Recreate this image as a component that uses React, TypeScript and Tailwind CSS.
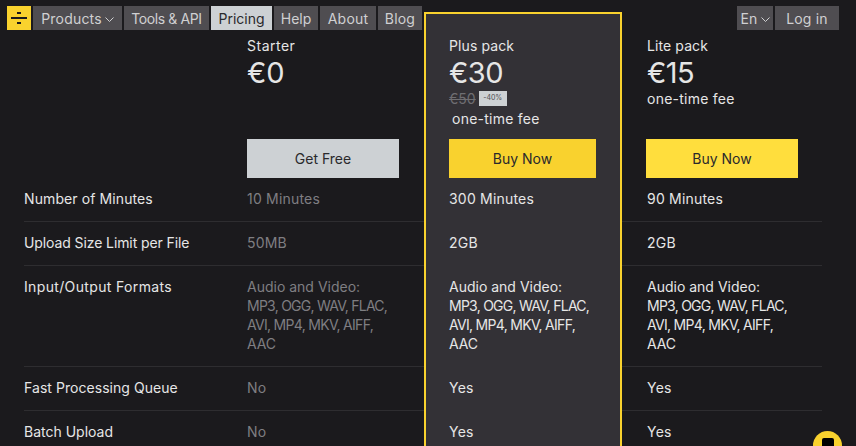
import React from "react";

const rowH = ["h-11", "h-11", "h-[101px]", "h-11", "h-11"];
const labels = ["Number of Minutes", "Upload Size Limit per File", "Input/Output Formats", "Fast Processing Queue", "Batch Upload"];
const labelTrack = ["tracking-[0.1px]", "tracking-[-0.1px]", "tracking-[0.35px]", "tracking-[0.05px]", "tracking-[0px]"];
const starter = ["10 Minutes", "50MB", "FORMATS", "No", "No"];
const paid = (m: string) => [m, "2GB", "FORMATS", "Yes", "Yes"];

function Value({ text }: { text: string }) {
  if (text !== "FORMATS") return <>{text}</>;
  return (
    <div className="tracking-[0px]">
      Audio and Video:
      <div className="tracking-[-0.75px]">MP3, OGG, WAV, FLAC,</div>
      <div className="tracking-[-0.7px]">AVI, MP4, MKV, AIFF,</div>
      <div className="tracking-[-0.1px]">AAC</div>
    </div>
  );
}

function Rows({ items, cls, border, track }: { items: string[]; cls: string; border: boolean; track: string[] | string }) {
  return (
    <div className="flex flex-col">
      {items.map((t, i) => (
        <div
          key={i}
          className={`${rowH[i]} shrink-0 pt-[11px] text-[14px] leading-[19px] ${typeof track === "string" ? track : track[i]} ${cls} ${border ? "border-b border-[#2e2d30]" : ""}`}
        >
          <Value text={t} />
        </div>
      ))}
    </div>
  );
}

function NavBtn({ children, light, w, track }: { children: React.ReactNode; light?: boolean; w: string; track?: string }) {
  return (
    <div
      className={`${w} h-6 flex items-center justify-center gap-[3px] text-[14px] ${track ?? "tracking-[0.2px]"} ${light ? "bg-[#cdd1d4] text-[#2a292c]" : "bg-[#4f4d51] text-[#d0d0d2]"}`}
    >
      {children}
    </div>
  );
}

const Chevron = () => (
  <svg width="9" height="6" viewBox="0 0 9 6" fill="none" className="mt-[3px]">
    <path d="M0.5 0.5 L4.5 4.5 L8.5 0.5" stroke="#d0d0d2" strokeWidth="1" />
  </svg>
);

export default function App() {
  return (
    <div className="relative w-[856px] h-[446px] overflow-hidden bg-[#1b1a1d] font-['Inter',sans-serif] text-[#e6e6e6]">
      <div className="flex pt-3 pl-6">
        {/* Labels */}
        <div className="w-[223px] shrink-0">
          <div className="h-[166px]" />
          <Rows items={labels} cls="text-[#e6e6e6]" border track={labelTrack} />
        </div>

        {/* Starter */}
        <div className="w-[177px] shrink-0">
          <div className="h-[166px] flex flex-col">
            <div className="pt-6 text-[14px] leading-[19px] tracking-[0.5px]">Starter</div>
            <div className="mt-[2px] text-[29px] leading-8">€0</div>
            <div className="mt-auto w-[152px] h-[39px] bg-[#cdd1d4] text-[#2a292c] text-[14px] flex items-center justify-center">Get Free</div>
          </div>
          <Rows items={starter} cls="text-[#7f7e82]" border track="tracking-[0.2px]" />
        </div>

        {/* Plus */}
        <div className="relative z-10 w-[198px] h-[460px] shrink-0 border-2 border-[#f9d22e] bg-[#333136]">
          <div className="h-[164px] flex flex-col pl-[23px] pr-6">
            <div className="pt-[22px] text-[14px] leading-[19px] tracking-[0.1px]">Plus pack</div>
            <div className="mt-[2px] text-[29px] leading-8 tracking-[-0.5px]">€30</div>
            <div className="flex items-center gap-[3px] h-[15px] mt-[2px]">
              <span className="text-[14px] text-[#6f6e72] line-through">€50</span>
              <span className="w-7 h-[15px] bg-[#cdd1d4] text-[#4f4d51] text-[7px] flex items-center justify-center">-40%</span>
            </div>
            <div className="mt-[3px] pl-[3px] text-[14px] leading-[19px] tracking-[0.25px]">one-time fee</div>
            <div className="mt-auto w-[147px] h-[39px] bg-[#f9d22e] text-[#2a292c] text-[14px] flex items-center justify-center">Buy Now</div>
          </div>
          <div className="pl-[23px]">
            <Rows items={paid("300 Minutes")} cls="text-[#e6e6e6]" border={false} track="tracking-[0.2px]" />
          </div>
        </div>

        {/* Lite */}
        <div className="w-[200px] shrink-0">
          <div className="h-[166px] flex flex-col pl-[25px]">
            <div className="pt-6 text-[14px] leading-[19px] tracking-[0.1px]">Lite pack</div>
            <div className="mt-[2px] text-[29px] leading-8 tracking-[-0.5px]">€15</div>
            <div className="text-[14px] leading-[19px] tracking-[0.25px]">one-time fee</div>
            <div className="mt-auto -ml-px w-[152px] h-[39px] bg-[#ffde3d] text-[#2a292c] text-[14px] flex items-center justify-center">Buy Now</div>
          </div>
          <div>
            {paid("90 Minutes").map((t, i) => (
              <div key={i} className={`${rowH[i]} pt-[11px] pl-[25px] text-[14px] leading-[19px] tracking-[0.2px] border-b border-[#2e2d30]`}>
                <Value text={t} />
              </div>
            ))}
          </div>
        </div>
      </div>

      {/* Fixed navigation over the page */}
      <div className="absolute left-[7px] top-[6px] right-[17px] flex items-center justify-between">
        <div className="flex items-center gap-[2px]">
          <div className="w-6 h-6 bg-[#f9d22e] flex items-center justify-center">
            <svg width="16" height="14" viewBox="0 0 16 14" fill="#1b1a1d">
              <rect x="6" y="1" width="4" height="2" />
              <rect x="0" y="6" width="16" height="2" />
              <rect x="6" y="11" width="4" height="2" />
            </svg>
          </div>
          <NavBtn w="w-[89px]">Products <Chevron /></NavBtn>
          <NavBtn w="w-[85px]" track="tracking-[-0.4px]">Tools &amp; API</NavBtn>
          <NavBtn w="w-[61px]" light track="tracking-[0px]">Pricing</NavBtn>
          <NavBtn w="w-[44px]" track="tracking-[0px]">Help</NavBtn>
          <NavBtn w="w-[56px]">About</NavBtn>
          <NavBtn w="w-[44px]">Blog</NavBtn>
        </div>
        <div className="flex items-center gap-[2px]">
          <NavBtn w="w-9">En<Chevron /></NavBtn>
          <NavBtn w="w-[64px]">Log in</NavBtn>
        </div>
      </div>

      {/* Chat widget */}
      <div className="absolute left-[813px] top-[431px] w-[29px] h-[29px] rounded-full bg-[#f9d22e] flex justify-center pt-[7px]">
        <div className="w-3 h-3 bg-black rounded-[2px]" />
      </div>
    </div>
  );
}
